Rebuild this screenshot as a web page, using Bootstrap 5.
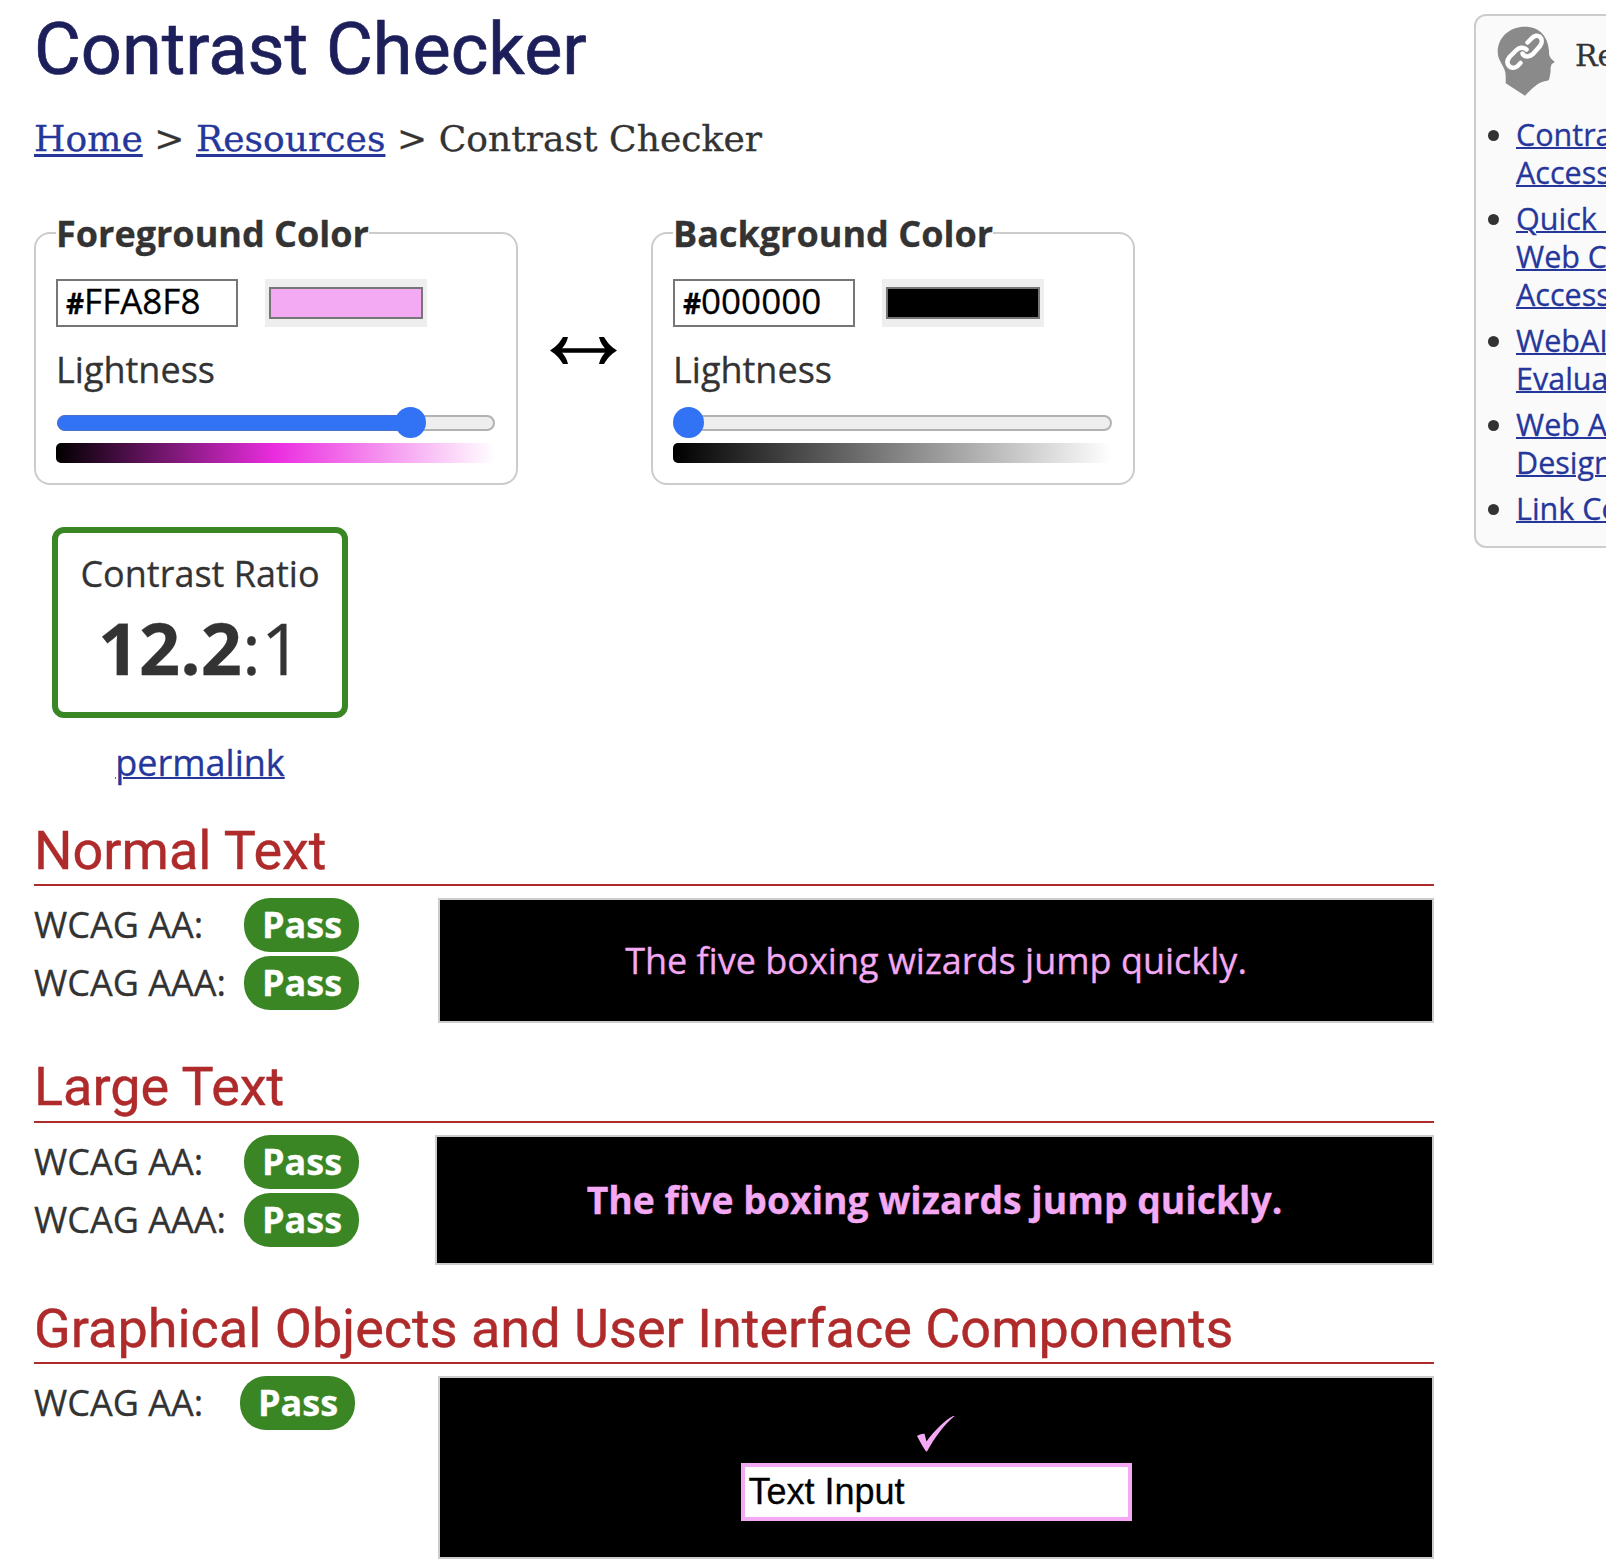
<!DOCTYPE html>
<html lang="en">
<head>
<meta charset="utf-8">
<meta name="viewport" content="width=device-width, initial-scale=1">
<title>Contrast Checker</title>
<link href="https://cdn.jsdelivr.net/npm/bootstrap@5.3.0/dist/css/bootstrap.min.css" rel="stylesheet">
<style>
html, body { overflow: hidden; }
body { width: 1606px; height: 1566px; font-family: "Open Sans", sans-serif; font-size: 36px; line-height: 50px; color: #333; background: #fff; -webkit-text-stroke: .3px currentColor; }
a { color: #25379b; text-decoration-thickness: 2px; }
main { width: 1400px; margin-left: 34px; flex: none; }
h1 { font: 400 72px/84px Roboto, sans-serif; color: #1d1f5b; margin: 8px 0 0; white-space: nowrap; -webkit-text-stroke: .7px #1d1f5b; }
.crumbs { font: 36px/50px "DejaVu Serif", serif; letter-spacing: .06px; margin-top: 22px; height: 50px; white-space: nowrap; }
.crumbs a { text-decoration-thickness: 3px; text-underline-offset: 3px; }
.pickers { margin-top: 68px; }
.picker { width: 484px; height: 253px; border: 2px solid #ccc; border-radius: 16px; padding: 0 20px; }
.picker .caption { font-weight: 700; line-height: 50px; height: 50px; margin: -25px 0 20px; background: #fff; width: max-content; white-space: nowrap; }
.light { margin-top: 18px; height: 49px; }
.hexbox { width: 182px; height: 48px; border: 2px solid #767676; padding: 0 8px; color: #000; font-size: 35px; line-height: 39px; background: #fff; }
.hexbox span { font-size: 28px; font-weight: 700; }
.well { width: 162px; height: 48px; background: #eee; padding: 8px 4px; margin-left: 27px; }
.well div { height: 32px; border: 2px solid #767676; }
.track { height: 16px; margin: 21px 0 0 1px; width: 438px; border: 2px solid #b2b2b2; border-radius: 8px; background: #eee; position: relative; }
.track .fill { position: absolute; left: -2px; top: -2px; height: 16px; border-radius: 8px 0 0 8px; background: #3273f6; border: 1px solid #4a72c8; }
.track .knob { position: absolute; top: -10px; width: 31px; height: 31px; border-radius: 50%; background: #3273f6; }
.ramp { height: 20px; width: 439px; margin-top: 12px; border-radius: 5px; }
.swap { width: 133px; padding: 105px 0 0 32px; }
.score { width: 296px; height: 191px; border: 6px solid #3a8625; border-radius: 12px; margin: 42px 0 0 18px; padding-top: 16px; }
.score .num { font-size: 72px; line-height: 98px; margin-top: -1px; }
.perma { width: 332px; height: 50px; margin-top: 20px; }
h2 { font: 400 54px/64px Roboto, sans-serif; color: #af2b2b; border-bottom: 2px solid #af2b2b; margin: 31px 0 12px; white-space: nowrap; -webkit-text-stroke: .4px #af2b2b; }
.verdict { height: 54px; line-height: 54px; margin-bottom: 4px; }
.verdict .lbl { width: 210px; white-space: nowrap; }
.pill { width: 115px; height: 54px; border-radius: 26px; background: #3a8625; color: #fff; font-weight: 700; text-align: center; padding-left: 1px; }
.sample { border: 2px solid #ccc; background: #000; color: #f3a9f4; white-space: nowrap; }
.demo { width: 391px; height: 58px; margin-top: 10px; border: 4px solid #f3a9f4; background: #fff; color: #000; font: 36px/50px "Liberation Sans", Arial, sans-serif; padding: 0 4px; }
aside { width: 400px; height: 534px; margin: 14px 0 0 40px; border: 2px solid #ccc; border-radius: 12px; background: #fafafa; flex: none; font-size: 30.5px; line-height: 38px; white-space: nowrap; }
aside .top { font: 30px/36px "DejaVu Serif", serif; height: 70px; margin: 10px 0 0 21px; }
aside .top span { margin: 12px 0 0 20px; }
aside ul { list-style: none; margin: 19px 0 0; padding: 0 0 0 40px; }
aside li { margin-bottom: 8px; position: relative; }
aside li::before { content: ""; position: absolute; left: -28px; top: 15px; width: 11px; height: 11px; border-radius: 50%; background: #333; }
</style>
<script src="https://cdn.jsdelivr.net/npm/bootstrap@5.3.0/dist/js/bootstrap.bundle.min.js"></script>
</head>
<body>
<div class="d-flex align-items-start">
<main>
  <h1>Contrast Checker</h1>
  <nav class="crumbs"><a href="#">Home</a> &gt; <a href="#">Resources</a> &gt; <span>Contrast Checker</span></nav>

  <div class="d-flex pickers">
    <section class="picker">
      <div class="caption">Foreground Color</div>
      <div class="d-flex"><div class="hexbox"><span>#</span>FFA8F8</div><div class="well"><div style="background:#f3aaf3"></div></div></div>
      <div class="light">Lightness</div>
      <div class="track"><div class="fill" style="width:353px"></div><div class="knob" style="left:336px"></div></div>
      <div class="ramp" style="background:linear-gradient(90deg,#000,#eb2de0 50%,#fff)"></div>
    </section>
    <div class="swap d-flex">
      <svg width="67" height="27" viewBox="0 0 67 27"><path d="M7 13.5H60" stroke="#000" stroke-width="4.4"/><path d="M0 13.5C7 9 10 5 13 0H18C17 5 14 10 10 13.5C14 17 17 22 18 27H13C10 22 7 18 0 13.5ZM67 13.5C60 9 57 5 54 0H49C50 5 53 10 57 13.5C53 17 50 22 49 27H54C57 22 60 18 67 13.5Z"/></svg>
    </div>
    <section class="picker">
      <div class="caption">Background Color</div>
      <div class="d-flex"><div class="hexbox"><span>#</span>000000</div><div class="well"><div style="background:#000"></div></div></div>
      <div class="light">Lightness</div>
      <div class="track"><div class="knob" style="left:-3px"></div></div>
      <div class="ramp" style="background:linear-gradient(90deg,#000,#808080 50%,#fff)"></div>
    </section>
  </div>

  <div class="score text-center"><div>Contrast Ratio</div><div class="num"><b>12.2</b>:1</div></div>
  <div class="text-center perma"><a href="#">permalink</a></div>

  <h2 style="height:67px">Normal Text</h2>
  <div class="d-flex justify-content-between">
    <div>
      <div class="verdict d-flex"><span class="lbl">WCAG AA:</span><span class="pill">Pass</span></div>
      <div class="verdict d-flex"><span class="lbl">WCAG AAA:</span><span class="pill">Pass</span></div>
    </div>
    <div class="sample d-flex align-items-center justify-content-center" style="width:996px;height:125px">The five boxing wizards jump quickly.</div>
  </div>

  <h2 style="margin-top:32px;height:68px">Large Text</h2>
  <div class="d-flex justify-content-between">
    <div>
      <div class="verdict d-flex"><span class="lbl">WCAG AA:</span><span class="pill">Pass</span></div>
      <div class="verdict d-flex"><span class="lbl">WCAG AAA:</span><span class="pill">Pass</span></div>
    </div>
    <div class="sample d-flex align-items-center justify-content-center fw-bold" style="width:999px;height:130px;font-size:37.33px">The five boxing wizards jump quickly.</div>
  </div>

  <h2 style="margin-top:32px;height:67px">Graphical Objects and User Interface Components</h2>
  <div class="d-flex justify-content-between">
    <div class="verdict d-flex"><span class="lbl" style="width:206px">WCAG AA:</span><span class="pill">Pass</span></div>
    <div class="sample d-flex flex-column align-items-center" style="width:996px;height:183px;padding-top:38px">
      <svg width="38" height="37" viewBox="0 0 38 37" fill="#f3a9f4"><path d="M0 20C1.500 18.500 5 17.500 7.500 17.700L9.500 25.500C17 15 27 5 36 0H37.500C27 9 18 21 10 35.500H9C6 31 3 26 0 20Z"/></svg>
      <div class="demo">Text Input</div>
    </div>
  </div>
</main>
<aside>
  <div class="top d-flex">
    <svg width="58" height="70" viewBox="0 0 58 70"><path fill="#8a8a8a" d="M28 .7C43 .7 51 11 52 25C52 29 52.500 30.500 54 32.500L57.700 36C57 37 55 37.500 54.500 38.500L53.500 42C54 45 53 50 52 54C51 55 47 55 45 56C39 58 33 65 28 69.700L8.700 57.300V50C8.700 40 .7 36 .7 26C.7 11 13 .7 28 .7Z"/><g fill="none" stroke="#fff" stroke-width="4.500" stroke-linecap="round"><path d="M30.500 16.500L34 13C41 5 48 13 43 20L36 28C32 31.500 27 31 25.500 27.500"/><path d="M29.500 23.500C26 20.500 22 21.500 19 24.500L12.500 31C7 38 14 44.500 20 40.500L23.500 37"/></g></svg>
    <span>Related Resources</span>
  </div>
  <ul>
    <li><a href="#">Contrast and Color<br>Accessibility</a></li>
    <li><a href="#">Quick Reference:<br>Web Content<br>Accessibility</a></li>
    <li><a href="#">WebAIM Contrast<br>Evaluation</a></li>
    <li><a href="#">Web Accessibility for<br>Designers</a></li>
    <li><a href="#">Link Contrast Checker</a></li>
  </ul>
</aside>
</div>
</body>
</html>
